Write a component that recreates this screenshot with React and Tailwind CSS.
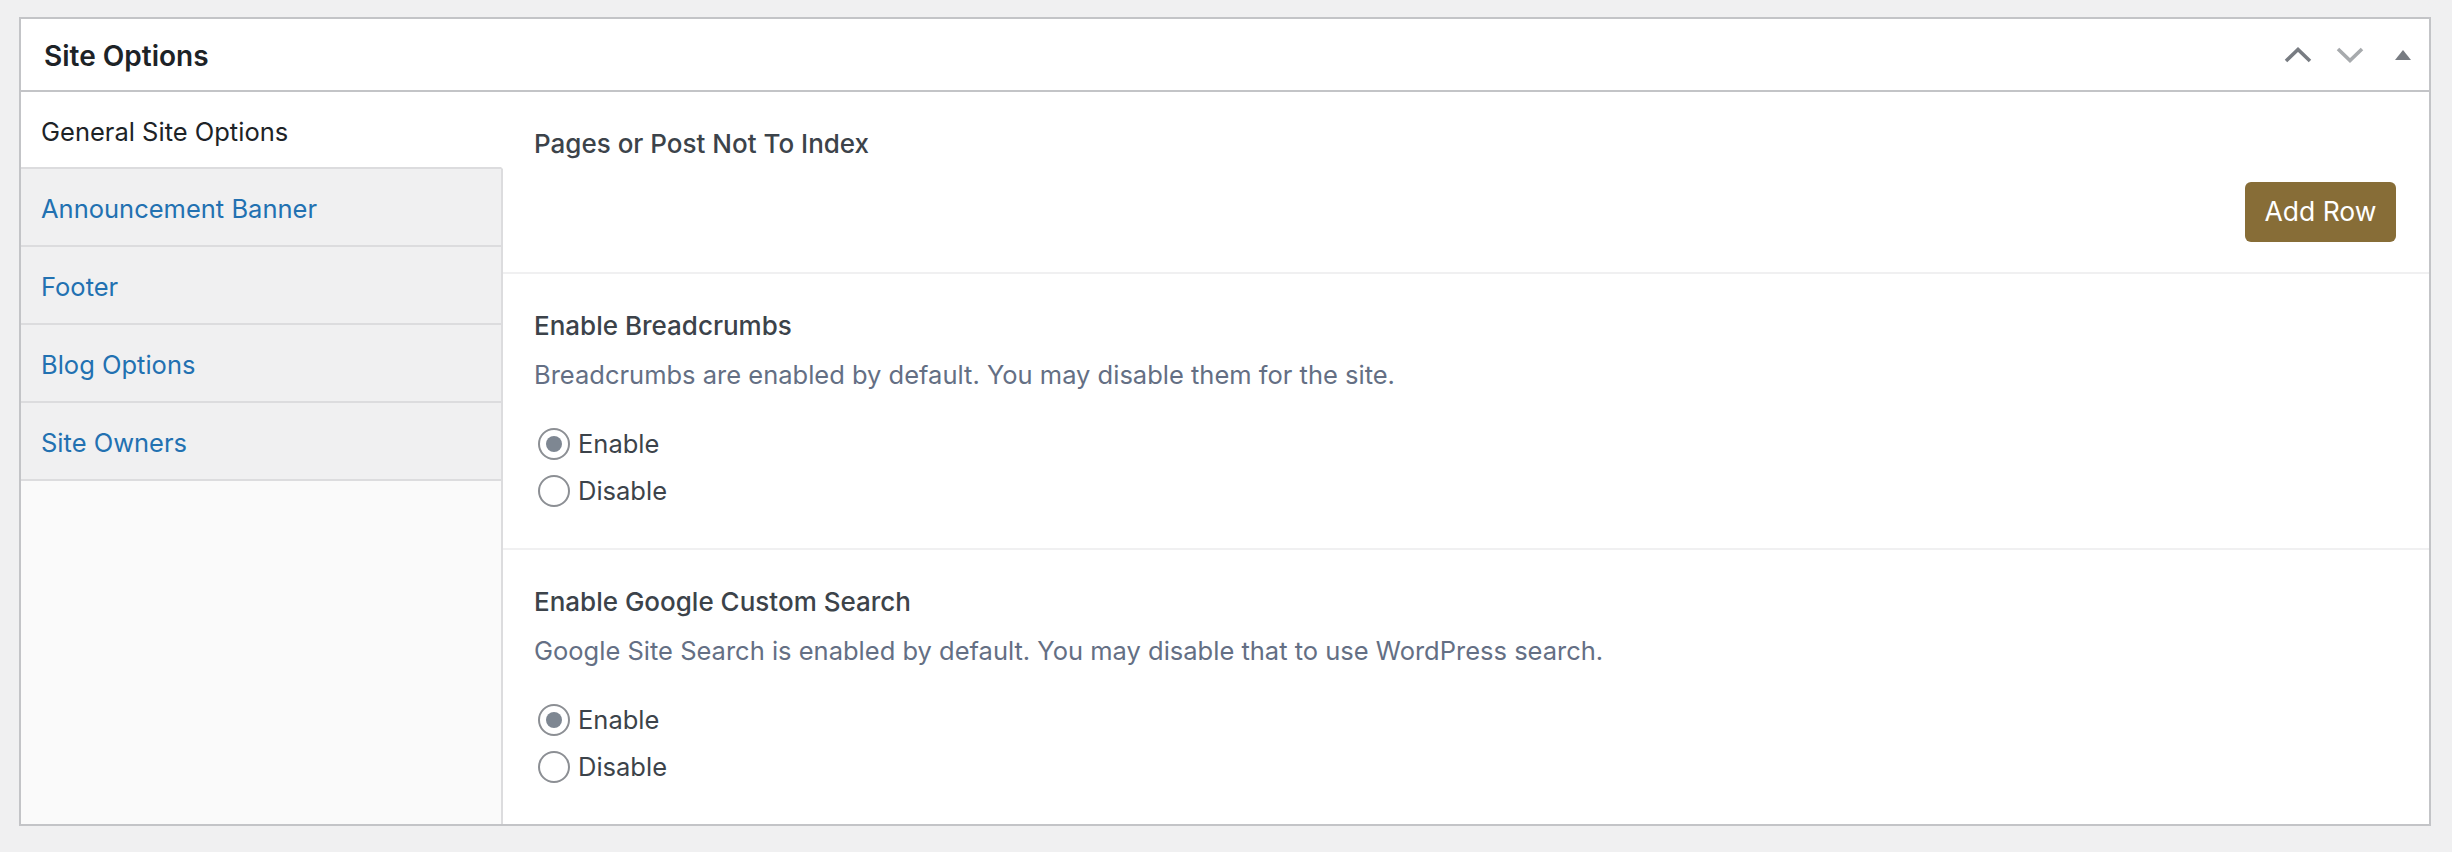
import React from "react";

const tabs = [
  { label: "General Site Options", active: true },
  { label: "Announcement Banner" },
  { label: "Footer" },
  { label: "Blog Options" },
  { label: "Site Owners" },
];

const ChevronUp = ({ color }) => (
  <svg width="28" height="16" viewBox="0 0 28 16" fill="none">
    <path d="M2 14 L14 2.5 L26 14" stroke={color} strokeWidth="3.6" />
  </svg>
);

const ChevronDown = ({ color }) => (
  <svg width="28" height="16" viewBox="0 0 28 16" fill="none">
    <path d="M2 2 L14 13.5 L26 2" stroke={color} strokeWidth="3.6" />
  </svg>
);

const Radio = ({ checked, label }) => (
  <label className="flex h-[47px] items-center">
    <span className="ml-[4px] flex h-[32px] w-[32px] items-center justify-center rounded-full border-2 border-[#8c8f94] bg-white">
      {checked && <span className="h-[16px] w-[16px] rounded-full bg-[#7e8792]" />}
    </span>
    <span className="ml-[8px] text-[25.5px] leading-[34px] text-[#3c434a]">{label}</span>
  </label>
);

const ToggleSection = ({ title, desc, last }) => (
  <div className={"px-[31px] pt-[34px] pb-[34px] " + (last ? "" : "border-b-2 border-[#f0f0f1]")}>
    <div className="text-[26px] font-medium leading-[36px] text-[#3c434a]">{title}</div>
    <p className="mt-[14px] text-[25.5px] leading-[34px] text-[#646f84]">{desc}</p>
    <div className="mt-[28px]">
      <Radio checked label="Enable" />
      <Radio label="Disable" />
    </div>
  </div>
);

export default function App() {
  return (
    <div
      className="min-h-[852px] bg-[#f0f0f1] pt-[17px] pl-[19px] pr-[21px]"
      style={{ fontFamily: "Inter, 'Noto Sans', sans-serif" }}
    >
      <div className="border-2 border-[#c3c4c7] bg-white">
        {/* header */}
        <div className="flex h-[73px] items-center justify-between border-b-2 border-[#c3c4c7] pl-[23px] pr-[18px]">
          <h2 className="pt-[3px] text-[28px] font-semibold text-[#1d2327]">Site Options</h2>
          <div className="flex items-center">
            <ChevronUp color="#787c82" />
            <span className="ml-[24px]">
              <ChevronDown color="#a7aaad" />
            </span>
            <svg className="ml-[31px]" width="16" height="10" viewBox="0 0 16 10">
              <polygon points="0,10 8,0 16,10" fill="#787c82" />
            </svg>
          </div>
        </div>

        <div className="flex">
          {/* tabs */}
          <div className="flex w-[482px] flex-col bg-[#fafafa]">
            {tabs.map((t) =>
              t.active ? (
                <div
                  key={t.label}
                  className="flex h-[77px] items-center border-b-2 border-r-2 border-b-[#dcdcde] border-r-white bg-white pl-[20px] pt-[5px] text-[25.5px] text-[#1d2327]"
                >
                  {t.label}
                </div>
              ) : (
                <div
                  key={t.label}
                  className="flex h-[78px] items-center border-b-2 border-r-2 border-[#dcdcde] bg-[#f0f0f1] pl-[20px] pt-[5px] text-[25.5px] text-[#2271b1]"
                >
                  {t.label}
                </div>
              )
            )}
            <div className="flex-1 border-r-2 border-[#dcdcde]" />
          </div>

          {/* fields */}
          <div className="flex-1">
            <div className="border-b-2 border-[#f0f0f1] pl-[31px] pr-[33px] pt-[34px] pb-[30px]">
              <div className="text-[26px] font-medium leading-[36px] text-[#3c434a]">
                Pages or Post Not To Index
              </div>
              <div className="mt-[20px] flex justify-end">
                <button className="h-[60px] w-[151px] rounded-[6px] bg-[#876d37] text-[26.5px] text-white">
                  Add Row
                </button>
              </div>
            </div>
            <ToggleSection
              title="Enable Breadcrumbs"
              desc="Breadcrumbs are enabled by default. You may disable them for the site."
            />
            <ToggleSection
              last
              title="Enable Google Custom Search"
              desc="Google Site Search is enabled by default. You may disable that to use WordPress search."
            />
          </div>
        </div>
      </div>
    </div>
  );
}
